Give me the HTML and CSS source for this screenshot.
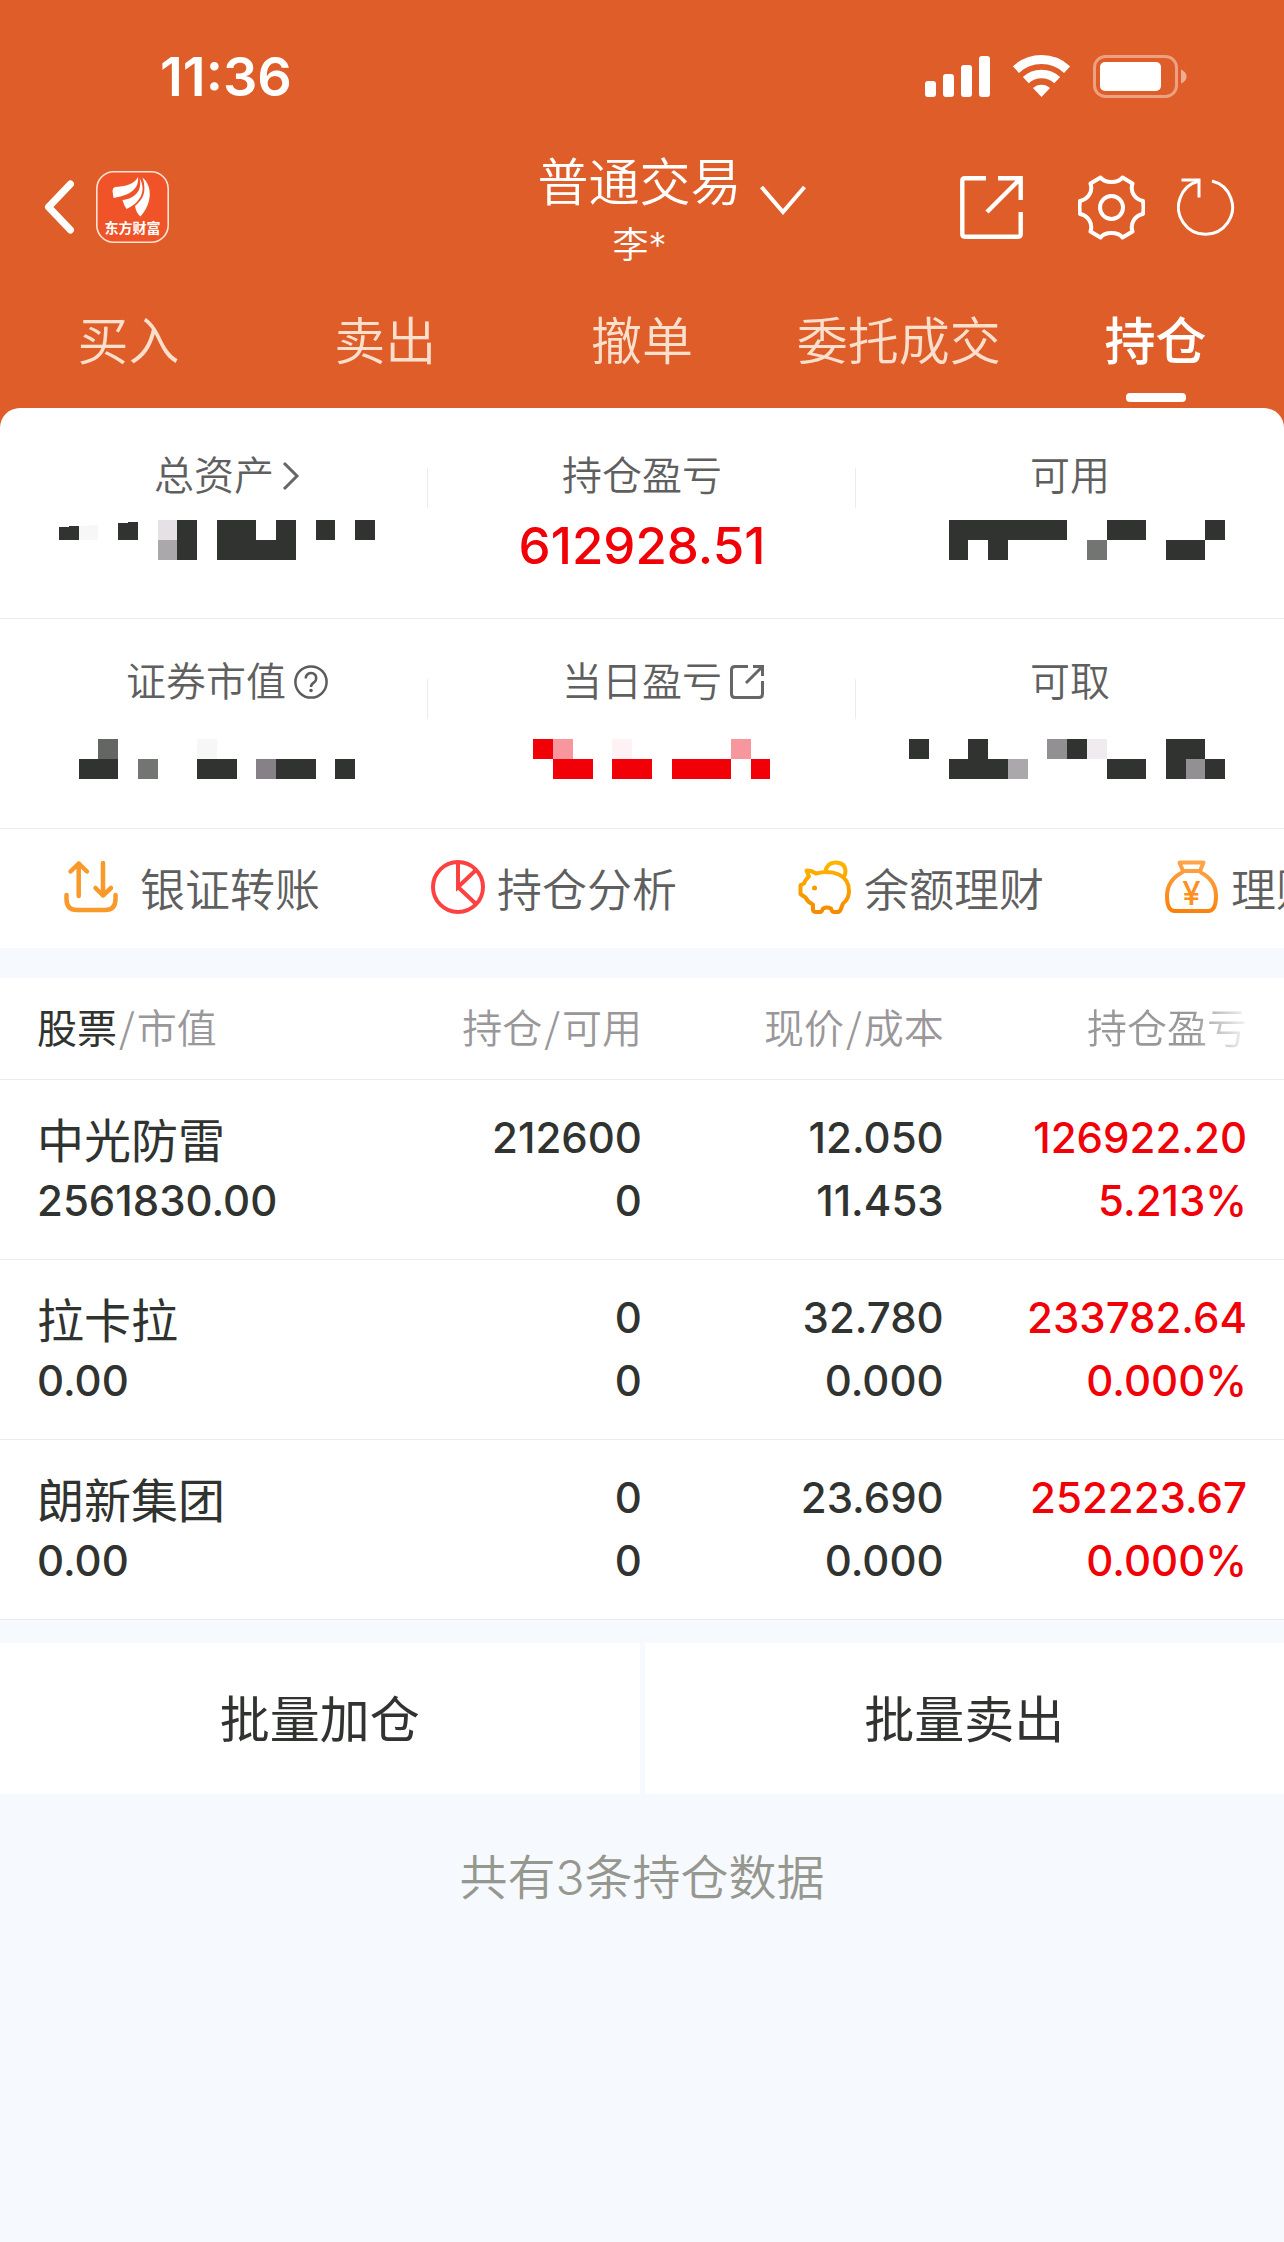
FILE: index.html
```html
<!DOCTYPE html>
<html lang="zh-CN">
<head>
  <meta charset="UTF-8" />
  <meta name="viewport" content="width=device-width, initial-scale=1.0" />
  <title>普通交易 - 持仓</title>
  <link rel="stylesheet" href="styles.css">
</head>
<body>
  <header class="header">
    <!-- Status bar -->
    <div class="status">
      <span class="time">11:36</span>
      <div class="status-icons">
        <svg width="65" height="42" viewBox="0 0 65 42" fill="#fff">
          <rect x="0" y="26" width="11" height="16" rx="3" />
          <rect x="18" y="19" width="11" height="23" rx="3" />
          <rect x="36" y="10" width="11" height="32" rx="3" />
          <rect x="54" y="1" width="11" height="41" rx="3" />
        </svg>
        <svg width="57" height="42" viewBox="0 0 57 42" fill="none" stroke="#fff">
          <path d="M2.9 14.6A37.5 37.5 0 0 1 54.1 14.6" stroke-width="9" />
          <path d="M12.8 25.2A23 23 0 0 1 44.2 25.2" stroke-width="8.6" />
          <path d="M28.5 42L20 33A12.5 12.5 0 0 1 37 33Z" fill="#fff" stroke="none" />
        </svg>
        <svg width="94" height="43" viewBox="0 0 94 43">
          <rect x="1.5" y="1.5" width="82" height="40" rx="11" fill="none" stroke="#fff" stroke-opacity=".42" stroke-width="3" />
          <rect x="7" y="7" width="61" height="29" rx="5" fill="#fff" />
          <path d="M88 14.500Q93.500 17 93.500 21.500T88 28.500Z" fill="#fff" fill-opacity=".5" />
        </svg>
      </div>
    </div>

    <!-- Title bar -->
    <div class="bar">
      <div class="bar-left">
        <button class="icon-btn" type="button" aria-label="返回">
          <svg width="30" height="54" viewBox="0 0 30 54" fill="none" stroke="#fff" stroke-width="7" stroke-linecap="round" stroke-linejoin="round">
            <path d="M26.500 4L4.500 27L26.500 50" />
          </svg>
        </button>
        <svg class="logo" width="73" height="72" viewBox="0 0 73 72">
          <rect x=".8" y=".8" width="71.4" height="70.4" rx="17" fill="#ef5327" stroke="#fde3d6" stroke-width="1.600" />
          <g fill="#fff">
            <path d="M42 6C38 14 28 15.500 19 16Q16.500 17 16.500 20L17.500 27C30 25 43.500 20 42 6Z" />
            <path d="M43.500 7C47 20 38 28 26.500 29Q28 34.500 30.500 38C44 32 51 20 43.500 7Z" />
            <path d="M46.500 6.500C51 20 47.500 28 39 35Q40 42 44.500 45.500C56 33 57 15 46.500 6.500Z" />
          </g>
          <text class="logo-text" x="36.5" y="62" text-anchor="middle">东方财富</text>
        </svg>
      </div>
      <button class="account" type="button">
        <span class="account-title">普通交易
          <svg width="46" height="30" viewBox="0 0 46 30" fill="none" stroke="#fff" stroke-width="4">
            <path d="M1.500 2L23 27L44.500 2" />
          </svg>
        </span>
        <span class="account-name">李*</span>
      </button>
      <div class="bar-right">
        <button class="icon-btn share" type="button" aria-label="分享">
          <svg width="63" height="63" viewBox="0 0 63 63" fill="none" stroke="#fff" stroke-width="4.400">
            <path d="M26 2.300H5Q2.300 2.300 2.300 5V58Q2.300 60.700 5 60.700H58Q60.700 60.700 60.700 58V36" />
            <path d="M38 2.300H60.700V24M60 3L27 36" />
          </svg>
        </button>
        <button class="icon-btn gear" type="button" aria-label="设置">
          <svg width="67" height="65" viewBox="0 0 67 65" fill="none" stroke="#fff" stroke-width="4" stroke-linejoin="round">
            <path d="M22.500 2.500C27 8.500 40 8.500 44.500 2.500L54.500 8.500C52 16 56 24 65 26Q66 32.500 65 39C56 41 52 49 54.500 56.500L44.500 62.500C40 56.500 27 56.500 22.500 62.500L12.500 56.500C15 49 11 41 2 39Q1 32.500 2 26C11 24 15 16 12.500 8.500Z" />
            <circle cx="33.500" cy="32.500" r="11.500" />
          </svg>
        </button>
        <button class="icon-btn" type="button" aria-label="刷新">
          <svg width="58" height="60" viewBox="0 0 58 60" fill="none" stroke="#fff" stroke-width="3">
            <path d="M35 4A27 27 0 1 1 22 4" />
            <path d="M4.500 3H22V20.500" />
          </svg>
        </button>
      </div>
    </div>

    <nav class="tabs">
      <a href="#">买入</a>
      <a href="#">卖出</a>
      <a href="#">撤单</a>
      <a href="#">委托成交</a>
      <a href="#" class="active">持仓</a>
    </nav>
  </header>

  <main>
    <!-- Asset summary, hidden amounts are drawn as mosaic cells -->
    <section class="summary">
      <div class="cell">
        <div class="label label-icon">总资产
          <svg class="chevron" width="18" height="30" viewBox="0 0 18 30" fill="none" stroke="#666" stroke-width="3">
            <path d="M2 2L15 15L2 28" />
          </svg>
        </div>
        <svg class="mosaic" viewBox="-.3 0 16.3 2" preserveAspectRatio="none">
          <path d="M0 .35L1 .3V1H0ZM3 .15L4 .1V1H3ZM6 0H7V2H6ZM8 0H10V1H11V0H12V2H8ZM13 0H14V1H13ZM15 0H16V1H15Z" />
          <path fill="#f7f7f7" d="M1 .3L2 .25V1H1Z" />
          <path fill="#e5e1e5" d="M5 0H6V1H5Z" />
          <path fill="#aaa8ab" d="M5 1H6V2H5Z" />
        </svg>
      </div>
      <div class="cell">
        <div class="label">持仓盈亏</div>
        <div class="amount">612928.51</div>
      </div>
      <div class="cell">
        <div class="label">可用</div>
        <svg class="mosaic" viewBox="0 0 16.3 2" preserveAspectRatio="none">
          <path d="M2 0H8V1H5V2H4V1H3V2H2ZM10 0H12V1H10ZM15 0H16V1H15ZM13 1H15V2H13Z" />
          <path fill="#727571" d="M9 1H10V2H9Z" />
        </svg>
      </div>
    </section>

    <section class="summary summary-second">
      <div class="cell">
        <div class="label label-icon">证券市值
          <svg width="34" height="34" viewBox="0 0 34 34" fill="none" stroke="#5c5c5c" stroke-width="2.500">
            <circle cx="17" cy="17" r="15.600" />
            <path d="M11.800 13.500A5.200 5.200 0 1 1 20 17.400Q17 19.400 17 22" />
            <circle cx="17" cy="25.500" r="1.800" fill="#5c5c5c" stroke="none" />
          </svg>
        </div>
        <svg class="mosaic" viewBox="-.3 0 16.3 2" preserveAspectRatio="none">
          <path d="M1 1H3V2H1ZM7 1H9V2H7ZM11 1H13V2H11ZM14 1H15V2H14Z" />
          <path fill="#636663" d="M2 0H3V1H2Z" />
          <path fill="#727571" d="M4 1H5V2H4Z" />
          <path fill="#f7f7f7" d="M7 0H8V1H7Z" />
          <path fill="#858187" d="M10 1H11V2H10Z" />
        </svg>
      </div>
      <div class="cell">
        <div class="label label-link">当日盈亏
          <svg width="34" height="36" viewBox="0 0 34 36" fill="none" stroke="#666" stroke-width="3">
            <path d="M18 2.500H5Q1.500 2.500 1.500 6V30Q1.500 33.500 5 33.500H29Q32.500 33.500 32.500 30V17" />
            <path d="M23 2.500H32.500V12M32 3L16 19" />
          </svg>
        </div>
        <svg class="mosaic mosaic-red" viewBox="0 0 17 2" preserveAspectRatio="none">
          <path d="M3 0H4V1H3ZM4 1H6V2H4ZM7 1H9V2H7ZM10 1H13V2H10ZM14 1H15V2H14Z" />
          <path fill="#f8969e" d="M4 0H5V1H4ZM13 0H14V1H13Z" />
          <path fill="#fff2f5" d="M7 0H8V1H7Z" />
        </svg>
      </div>
      <div class="cell">
        <div class="label">可取</div>
        <svg class="mosaic" viewBox="0 0 16.3 2" preserveAspectRatio="none">
          <path d="M0 0H1V1H0ZM3 0H4V1H5V2H2V1H3ZM8 0H9V1H8ZM10 1H12V2H10ZM13 0H15V1H16V2H13Z" />
          <path fill="#939094" d="M7 0H8V1H7ZM14 1H15V2H14Z" />
          <path fill="#efebef" d="M9 0H10V1H9Z" />
          <path fill="#aaa8ab" d="M5 1H6V2H5Z" />
        </svg>
      </div>
    </section>

    <nav class="shortcuts">
      <a href="#" class="transfer">
        <svg width="54" height="54" viewBox="0 0 54 54" fill="none" stroke="#f8992a" stroke-width="4.500" stroke-linecap="round" stroke-linejoin="round">
          <path d="M14.700 36V3.500M6.500 11.500L14.700 3.500L23 11.500M39 3V35.500M31.500 28L39 35.500L47 28" />
          <path d="M2.500 35V39Q2.500 50 13 50H41Q51.500 50 51.500 39V35" />
        </svg>
        银证转账
      </a>
      <a href="#">
        <svg width="54" height="54" viewBox="0 0 54 54" fill="none" stroke="#fd4141" stroke-width="4">
          <circle cx="27" cy="27" r="25" />
          <path d="M27 2V27L45 10M27 27L45 44" />
        </svg>
        持仓分析
      </a>
      <a href="#">
        <svg width="54" height="54" viewBox="0 0 54 54" fill="none" stroke="url(#gold)" stroke-width="4" stroke-linejoin="round">
          <defs>
            <linearGradient id="gold" x1="0" y1="0" x2="0" y2="54" gradientUnits="userSpaceOnUse">
              <stop offset="0" stop-color="#ffb700" />
              <stop offset="1" stop-color="#f58a00" />
            </linearGradient>
          </defs>
          <path d="M8.500 10.500Q13 10 18 13.500C35 9 51 15 51 31Q51 39 45 43.500L42.500 50Q41.500 52 39 52H36Q34 52 33 48.500Q29 46.500 25 48.500Q24 52 22 52H18Q15.500 52 15 50V44.500Q10 42.500 7.500 37.500L2.500 34V25L6 23.500Q8 18.500 11 16.500Z" />
          <path d="M27.500 11.500Q29 2.500 37.500 2.500Q47 2.500 47.500 11Q47.500 14 46 17" />
          <circle cx="16.500" cy="28" r="2.500" fill="#f99b00" stroke="none" />
        </svg>
        余额理财
      </a>
      <a href="#">
        <svg width="54" height="54" viewBox="0 0 54 54" fill="none" stroke="url(#orange)" stroke-width="4" stroke-linejoin="round">
          <defs>
            <linearGradient id="orange" x1="27" y1="0" x2="20" y2="54" gradientUnits="userSpaceOnUse">
              <stop offset="0" stop-color="#ffa64d" />
              <stop offset="1" stop-color="#fb7f08" />
            </linearGradient>
          </defs>
          <path d="M14.500 2.500H38.500L35 11H18Z" />
          <path d="M18 12Q2 20 2 36Q2 51 10 51H43Q51 51 51 36Q51 20 35 12" />
          <text class="yen" x="26.500" y="45" text-anchor="middle">¥</text>
        </svg>
        理财
      </a>
    </nav>

    <!-- Holdings -->
    <table class="holdings">
      <colgroup>
        <col class="col-stock" />
        <col class="col-amount" />
        <col class="col-price" />
        <col class="col-profit" />
      </colgroup>
      <thead>
        <tr>
          <th scope="col"><b>股票</b><i>/</i>市值</th>
          <th scope="col">持仓<i>/</i>可用</th>
          <th scope="col">现价<i>/</i>成本</th>
          <th scope="col"><span class="fade">持仓盈亏</span></th>
        </tr>
      </thead>
      <tbody>
        <tr>
          <td><span class="name">中光防雷</span><span>2561830.00</span></td>
          <td><span>212600</span><span>0</span></td>
          <td><span>12.050</span><span>11.453</span></td>
          <td class="up"><span>126922.20</span><span>5.213%</span></td>
        </tr>
        <tr>
          <td><span class="name">拉卡拉</span><span>0.00</span></td>
          <td><span>0</span><span>0</span></td>
          <td><span>32.780</span><span>0.000</span></td>
          <td class="up"><span>233782.64</span><span>0.000%</span></td>
        </tr>
        <tr>
          <td><span class="name">朗新集团</span><span>0.00</span></td>
          <td><span>0</span><span>0</span></td>
          <td><span>23.690</span><span>0.000</span></td>
          <td class="up"><span>252223.67</span><span>0.000%</span></td>
        </tr>
      </tbody>
    </table>

    <div class="actions">
      <button type="button">批量加仓</button>
      <button type="button">批量卖出</button>
    </div>

    <p class="total">共有3条持仓数据</p>
  </main>
</body>
</html>
```
FILE: styles.css
```css
* {
  box-sizing: border-box;
}
body {
  margin: 0;
  background-color: #f6faff;
  color: #30332f;
  font-family: Inter, "Noto Sans CJK SC", sans-serif;
}
button {
  margin: 0;
  padding: 0;
  border: 0;
  background: none;
  color: inherit;
  font: inherit;
}
a {
  color: inherit;
  text-decoration: none;
}
svg {
  display: block;
  flex: none;
}

/* Header */
.header {
  background-color: #df5d29;
  color: white;
}
.status {
  display: flex;
  justify-content: space-between;
  align-items: flex-start;
  height: 126px;
  padding: 46px 97px 0 160px;
}
.time {
  font-size: 54px;
  font-weight: 600;
  line-height: 62px;
}
.status-icons {
  display: flex;
  align-items: center;
  gap: 23px;
  height: 60px;
}
.bar {
  display: grid;
  grid-template-columns: 1fr auto 1fr;
  align-items: center;
  height: 162px;
  padding: 0 49px 0 44px;
}
.bar-left,
.bar-right {
  display: flex;
  align-items: center;
}
.bar-left {
  gap: 22px;
}
.bar-right {
  justify-content: flex-end;
}
.share {
  margin-right: 55px;
}
.gear {
  margin-right: 32px;
}
.logo-text {
  fill: white;
  font-family: "Noto Sans CJK SC", sans-serif;
  font-size: 14px;
  font-weight: 700;
}
.account {
  padding-top: 4px;
}
.account-title {
  display: flex;
  align-items: center;
  gap: 18px;
  padding-left: 64px;
  font-family: "Noto Sans CJK SC", sans-serif;
  font-size: 51px;
  font-weight: 350;
  line-height: 62px;
}
.account-title svg {
  margin-top: 42px;
}
.account-name {
  display: block;
  font-size: 36px;
  font-weight: 350;
  line-height: 60px;
}

/* Tabs */
.tabs {
  display: grid;
  grid-template-columns: repeat(5, 1fr);
  height: 120px;
  color: #fadfcd;
  font-family: "Noto Sans CJK SC", sans-serif;
  font-size: 51px;
  font-weight: 350;
  line-height: 60px;
  text-align: center;
}
.tabs a {
  padding-top: 20px;
}
.tabs .active {
  color: white;
  font-weight: 500;
}
.tabs .active::after {
  content: "";
  display: block;
  width: 60px;
  height: 9px;
  margin: 25px auto 0;
  border-radius: 4px;
  background-color: white;
}

/* Summary */
main {
  background-image: linear-gradient(#df5d29, #df5d29);
  background-repeat: no-repeat;
  background-size: 100% 30px;
}
.summary {
  display: grid;
  grid-template-columns: repeat(3, 1fr);
  height: 211px;
  border-bottom: 1px solid #ebebeb;
  border-radius: 20px 20px 0 0;
  background-color: white;
}
.summary-second {
  height: 210px;
  border-radius: 0;
}
.cell {
  display: flex;
  flex-direction: column;
  align-items: center;
  padding-top: 37px;
  background: linear-gradient(#ececec, #ececec) no-repeat right 60px / 1px 40px;
}
.cell:last-child {
  background: none;
}
.summary-second .cell {
  padding-top: 32px;
}
.label {
  display: flex;
  align-items: center;
  gap: 8px;
  color: #5f5f5f;
  font-family: "Noto Sans CJK SC", sans-serif;
  font-size: 40px;
  font-weight: 350;
  line-height: 56px;
}
.label svg {
  margin-top: 5px;
}
.label-icon {
  padding-left: 26px;
}
.label-link {
  padding-left: 42px;
}
.amount {
  margin-top: 15px;
  color: #f10008;
  font-size: 51px;
  font-weight: 500;
  line-height: 60px;
}
.mosaic {
  width: 322px;
  height: 40px;
  margin-top: 19px;
  fill: #30332f;
  shape-rendering: crispEdges;
}
.mosaic-red {
  width: 336px;
  fill: #f10008;
}
.summary-second .mosaic {
  margin-top: 32px;
}

/* Shortcuts */
.shortcuts {
  display: flex;
  height: 119px;
  padding: 0 0 3px 64px;
  overflow: hidden;
  background-color: white;
  color: #5f5f5f;
  font-family: "Noto Sans CJK SC", sans-serif;
  font-size: 45px;
  font-weight: 350;
}
.shortcuts a {
  display: flex;
  flex: 0 0 367px;
  align-items: center;
  gap: 12px;
  white-space: nowrap;
}
.shortcuts .transfer {
  gap: 22px;
}
.yen {
  fill: #ff8f1f;
  stroke: none;
  font-family: Inter, sans-serif;
  font-size: 33px;
  font-weight: 500;
}

/* Holdings table */
.holdings {
  width: 100%;
  margin-top: 30px;
  border-collapse: collapse;
  table-layout: fixed;
  background-color: white;
}
.col-stock {
  width: 31%;
}
.col-amount {
  width: 19%;
}
.col-price {
  width: 23.5%;
}
.col-profit {
  width: 26.5%;
}
.holdings tr {
  border-bottom: 1px solid #ebebeb;
}
.holdings th {
  height: 101px;
  padding: 0 0 4px;
  color: #9a979a;
  font-family: "Noto Sans CJK SC", sans-serif;
  font-size: 40px;
  font-weight: 350;
  text-align: right;
}
.holdings td {
  padding: 26px 0 27px;
  font-size: 42px;
  font-weight: 500;
  line-height: 63px;
  text-align: right;
}
.holdings th:first-child,
.holdings td:first-child {
  padding-left: 37px;
  text-align: left;
}
.holdings th:last-child,
.holdings td:last-child {
  padding-right: 37px;
}
.holdings b {
  color: #30332f;
  font-weight: 400;
}
.holdings i {
  padding: 0 2px;
  font-style: normal;
}
.holdings td span {
  display: block;
}
.holdings .name {
  font-family: "Noto Sans CJK SC", sans-serif;
  font-size: 47px;
  font-weight: 400;
}
.holdings .up {
  color: #f10008;
}
.fade {
  -webkit-mask-image: linear-gradient(to right, black 66%, rgba(0, 0, 0, 0.1));
  mask-image: linear-gradient(to right, black 66%, rgba(0, 0, 0, 0.1));
}

/* Bottom actions */
.actions {
  display: grid;
  grid-template-columns: 1fr 1fr;
  gap: 5px;
  margin-top: 23px;
}
.actions button {
  height: 151px;
  padding-bottom: 4px;
  background-color: white;
  font-family: "Noto Sans CJK SC", sans-serif;
  font-size: 50px;
}
.total {
  margin: 48px 0 0;
  color: #96978f;
  font-size: 48px;
  font-weight: 350;
  line-height: 72px;
  text-align: center;
}
```
